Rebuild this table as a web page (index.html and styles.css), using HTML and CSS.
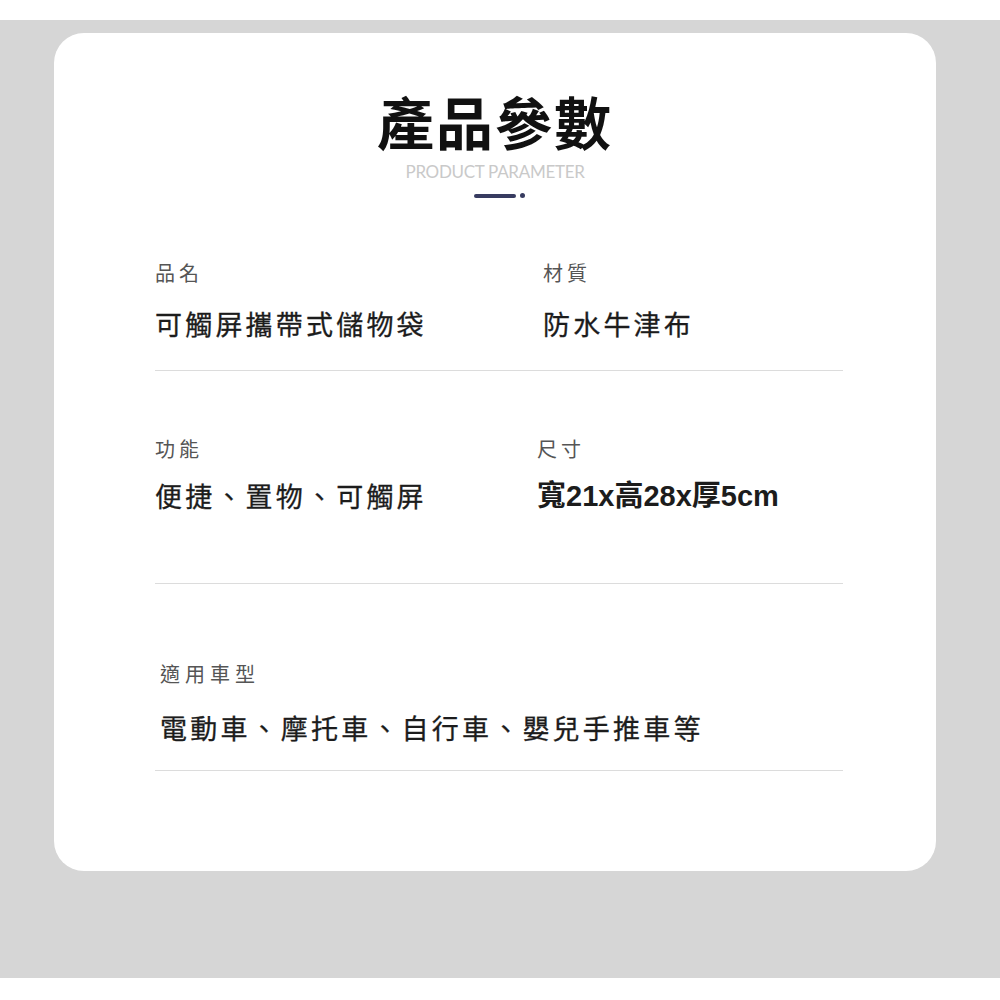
FILE: index.html
```html
<!DOCTYPE html>
<html lang="zh-Hant">
<head>
    <meta charset="UTF-8">
    <meta name="viewport" content="width=device-width, initial-scale=1.0">
    <title>產品參數</title>
    <link rel="stylesheet" href="styles.css">
</head>
<body>
<div class="band">
    <div class="card">
        <div class="head">
            <h1 class="title">產品參數</h1>
            <div class="subtitle">PRODUCT PARAMETER</div>
            <div class="mark"><span class="bar"></span><span class="dot"></span></div>
        </div>

        <div class="params">
            <div class="row row-first">
                <div class="cell">
                    <div class="label">品名</div>
                    <div class="value">可觸屏攜帶式儲物袋</div>
                </div>
                <div class="cell">
                    <div class="label">材質</div>
                    <div class="value">防水牛津布</div>
                </div>
            </div>
            <div class="row row-mid">
                <div class="cell">
                    <div class="label">功能</div>
                    <div class="value">便捷、置物、可觸屏</div>
                </div>
                <div class="cell cell-shift">
                    <div class="label">尺寸</div>
                    <div class="value value-num">寬21x高28x厚5cm</div>
                </div>
            </div>
            <div class="row row-last">
                <div class="cell cell-wide">
                    <div class="label label-big">適用車型</div>
                    <div class="value">電動車、摩托車、自行車、嬰兒手推車等</div>
                </div>
            </div>
        </div>
    </div>
</div>
</body>
</html>
```

FILE: styles.css
```css
body {
    margin: 0;
    background: #fff;
    font-family: "Noto Sans CJK TC", "Noto Sans CJK JP", sans-serif;
    color: #1a1a1a;
}
.band {
    margin-top: 20px;
    height: 958px;
    box-sizing: border-box;
    background: #d6d6d6;
    padding: 13px 64px 0 54px;
}
.card {
    background: #fff;
    border-radius: 30px;
    height: 838px;
    box-sizing: border-box;
    padding: 59px 93px 0 101px;
}

/* 見出し */
.head {
    display: flex;
    flex-direction: column;
    align-items: center;
    margin-left: -8px; /* カードの中心に合わせる */
}
.title {
    margin: 0;
    font-size: 57px;
    line-height: 1;
    font-weight: 700;
    color: #111;
    letter-spacing: 2px;
}
.subtitle {
    margin-top: 14px;
    font-family: Lato, "Liberation Sans", sans-serif;
    font-size: 17px;
    line-height: 18px;
    color: #c9c9c9;
    letter-spacing: -0.3px;
}
.mark {
    display: flex;
    align-items: center;
    gap: 4px;
    margin-top: 12px;
    margin-left: 8px;
}
.bar {
    width: 42px;
    height: 4px;
    border-radius: 2px;
    background: #373b60;
}
.dot {
    width: 5px;
    height: 5px;
    border-radius: 50%;
    background: #373b60;
}

/* 表 */
.params {
    margin-top: 65px;
}
.row {
    display: grid;
    grid-template-columns: 388px 1fr;
    border-bottom: 1px solid #dcdcdc;
}
.row-first {
    padding-bottom: 33px;
}
.row-mid {
    padding-top: 68px;
    padding-bottom: 72px;
}
.row-last {
    padding-top: 80px;
    padding-bottom: 29px;
}
.cell-wide {
    grid-column: 1 / 3;
    padding-left: 5px;
}
.cell-shift {
    margin-left: -6px;
}
.label {
    font-size: 20px;
    line-height: 1;
    letter-spacing: 4px;
    color: #555;
}
.label-big {
    font-size: 20px;
    letter-spacing: 5px;
}
.value {
    margin-top: 27px;
    font-size: 27px;
    line-height: 1;
    letter-spacing: 3.2px;
    font-weight: 400;
    color: #1c1c1c;
    -webkit-text-stroke: 0.3px #1c1c1c;
}
.value-num {
    font-family: "Liberation Sans", "Noto Sans CJK TC", sans-serif;
    font-weight: 700;
    letter-spacing: 0;
    font-size: 29px;
    -webkit-text-stroke: 0;
}
.row-mid .value {
    margin-top: 23px;
}
.row-last .value {
    margin-top: 30px;
}
```
